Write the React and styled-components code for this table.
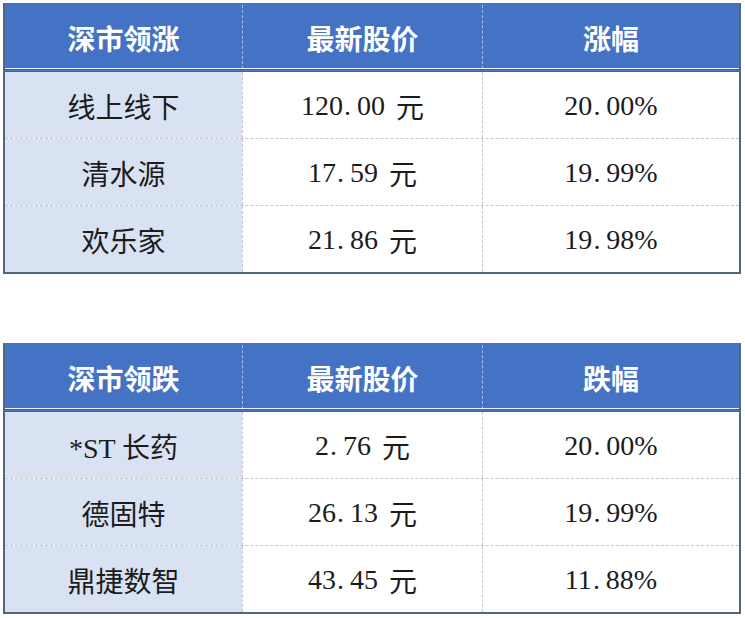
import React from 'react';
import styled, { createGlobalStyle } from 'styled-components';

const GlobalStyle = createGlobalStyle`
  body {
    margin: 0;
    background: #fff;
    font-family: "Liberation Serif", "Noto Sans CJK SC", serif;
  }
`;

const tables = [
  {
    head: ['深市领涨', '最新股价', '涨幅'],
    rows: [
      ['线上线下', '120.00', '20.00'],
      ['清水源', '17.59', '19.99'],
      ['欢乐家', '21.86', '19.98'],
    ],
  },
  {
    head: ['深市领跌', '最新股价', '跌幅'],
    rows: [
      ['*ST 长药', '2.76', '20.00'],
      ['德固特', '26.13', '19.99'],
      ['鼎捷数智', '43.45', '11.88'],
    ],
  },
];

const Page = styled.div`
  display: flex;
  flex-direction: column;
  gap: 69px;
  padding: 3px 0 0 3px;
`;

const Table = styled.div`
  box-sizing: border-box;
  width: 738px;
  border: 2px solid #52677c;
  border-top-color: #4472c4;
`;

const Row = styled.div`
  display: grid;
  grid-template-columns: 237px 240px 1fr;
  box-sizing: border-box;
  height: ${p => (p.$head ? '67px' : p.$last ? '66px' : '67px')};
  background: ${p => (p.$head ? '#4472c4' : '#fff')};
  border-bottom: ${p =>
    p.$head ? '3px double #3a64b4' : p.$last ? 'none' : '1px dashed #c4c8cf'};
  ${p => p.$head && 'box-shadow: inset 0 -4px 0 -3px #e8eefa;'}
`;

const Cell = styled.div`
  display: flex;
  align-items: center;
  justify-content: center;
  font-size: 28px;
  color: ${p => (p.$head ? '#fff' : '#1c1c1c')};
  font-weight: ${p => (p.$head ? 700 : 400)};
  font-family: ${p =>
    p.$head ? '"Noto Sans CJK SC", sans-serif' : '"Liberation Serif", "Noto Sans CJK SC", serif'};
  background: ${p => (p.$first && !p.$head ? '#d9e2f3' : 'transparent')};
  border-left: ${p =>
    p.$first ? 'none' : p.$head ? '1px dashed rgba(255,255,255,0.55)' : '1px dashed #c4c8cf'};
  padding-top: 2px;
  white-space: pre;
`;

const Dot = styled.span`
  display: inline-block;
  width: 0.5em;
  padding-left: 0.04em;
  box-sizing: border-box;
`;

const Unit = styled.span`
  margin-left: 11px;
  font-family: "Noto Sans CJK SC", sans-serif;
`;

const Num = ({ value }) => {
  const [a, b] = value.split('.');
  return (
    <>
      {a}
      <Dot>.</Dot>
      {b}
    </>
  );
};

export default function App() {
  return (
    <Page>
      <GlobalStyle />
      {tables.map((t, ti) => (
        <Table key={ti}>
          <Row $head>
            {t.head.map((h, i) => (
              <Cell key={i} $head $first={i === 0}>{h}</Cell>
            ))}
          </Row>
          {t.rows.map((r, ri) => (
            <Row key={ri} $last={ri === t.rows.length - 1}>
              <Cell $first>{r[0]}</Cell>
              <Cell>
                <Num value={r[1]} />
                <Unit>元</Unit>
              </Cell>
              <Cell>
                <Num value={r[2]} />%
              </Cell>
            </Row>
          ))}
        </Table>
      ))}
    </Page>
  );
}
